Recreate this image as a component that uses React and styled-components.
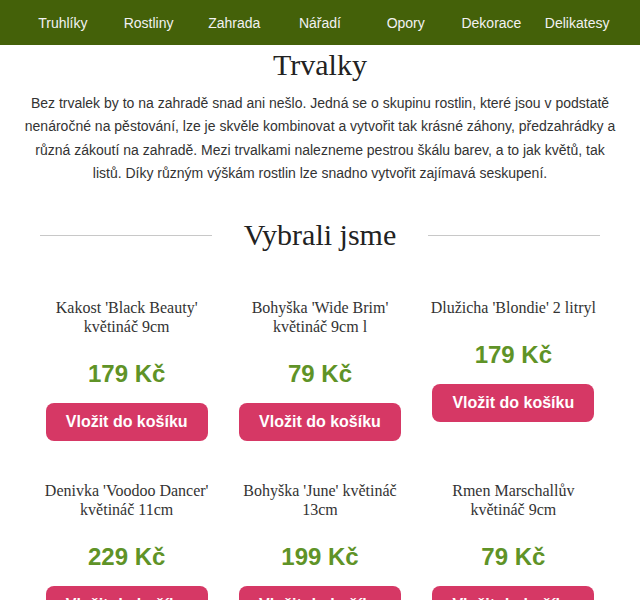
import React from 'react'
import styled, { createGlobalStyle } from 'styled-components'

const GlobalStyle = createGlobalStyle`
  body {
    margin: 0;
    background: #fff;
    font-family: "Liberation Sans", Arial, sans-serif;
    color: #333;
  }
`

const menu = ['Truhlíky', 'Rostliny', 'Zahrada', 'Nářadí', 'Opory', 'Dekorace', 'Delikatesy']

const products = [
  { name: "Kakost 'Black Beauty' květináč 9cm", price: '179 Kč' },
  { name: "Bohyška 'Wide Brim' květináč 9cm l", price: '79 Kč' },
  { name: "Dlužicha 'Blondie' 2 litryl", price: '179 Kč' },
  { name: "Denivka 'Voodoo Dancer' květináč 11cm", price: '229 Kč' },
  { name: "Bohyška 'June' květináč 13cm", price: '199 Kč' },
  { name: 'Rmen Marschallův květináč 9cm', price: '79 Kč' },
]

const Nav = styled.nav`
  background: #446109;
  height: 45px;
  padding: 0 20px;
  display: grid;
  grid-template-columns: repeat(7, 1fr);
  align-items: center;

  a {
    color: #f2f2f2;
    font-size: 14px;
    text-align: center;
    text-decoration: none;
  }
`

const Intro = styled.section`
  padding: 0 20px;
  text-align: center;

  h1 {
    margin: 3px 0 10px;
    font-family: "Liberation Serif", "Times New Roman", serif;
    font-weight: normal;
    font-size: 30px;
    color: #222;
  }

  p {
    margin: 0;
    font-size: 14px;
    line-height: 23.3px;
    color: #333;
  }
`

const Divider = styled.div`
  display: flex;
  align-items: center;
  gap: 32px;
  padding: 0 40px;
  margin: 33px 0 46px;

  &::before,
  &::after {
    content: '';
    flex: 1;
    height: 1px;
    background: #c8c8c8;
  }

  h2 {
    margin: 0;
    font-family: "Liberation Serif", "Times New Roman", serif;
    font-weight: normal;
    font-size: 30px;
    color: #222;
  }
`

const Grid = styled.div`
  display: grid;
  grid-template-columns: repeat(3, 1fr);
  row-gap: 40px;
  padding: 0 30px;
`

const Card = styled.div`
  padding: 0 12px;
  display: flex;
  flex-direction: column;
  align-items: center;
  text-align: center;

  h3 {
    margin: 0;
    font-family: "Liberation Serif", "Times New Roman", serif;
    font-weight: normal;
    font-size: 16px;
    line-height: 19px;
    color: #333;
  }
`

const Price = styled.div`
  margin-top: 24px;
  font-size: 24px;
  font-weight: bold;
  line-height: 28px;
  color: #5f9327;
`

const Button = styled.button`
  margin-top: 15px;
  padding: 10px 20px;
  border: none;
  border-radius: 8px;
  background: #d63865;
  color: #fff;
  font-family: "Liberation Sans", Arial, sans-serif;
  font-size: 16px;
  font-weight: bold;
  line-height: 18px;
  cursor: pointer;
`

const App = () => (
  <>
    <GlobalStyle />
    <Nav>
      {menu.map(item => (
        <a key={item} href="#">{item}</a>
      ))}
    </Nav>
    <Intro>
      <h1>Trvalky</h1>
      <p>
        Bez trvalek by to na zahradě snad ani nešlo. Jedná se o skupinu rostlin, které jsou v podstatě
        nenáročné na pěstování, lze je skvěle kombinovat a vytvořit tak krásné záhony, předzahrádky a
        různá zákoutí na zahradě. Mezi trvalkami nalezneme pestrou škálu barev, a to jak květů, tak
        listů. Díky různým výškám rostlin lze snadno vytvořit zajímavá seskupení.
      </p>
    </Intro>
    <Divider>
      <h2>Vybrali jsme</h2>
    </Divider>
    <Grid>
      {products.map(p => (
        <Card key={p.name}>
          <h3>{p.name}</h3>
          <Price>{p.price}</Price>
          <Button>Vložit do košíku</Button>
        </Card>
      ))}
    </Grid>
  </>
)

export default App
